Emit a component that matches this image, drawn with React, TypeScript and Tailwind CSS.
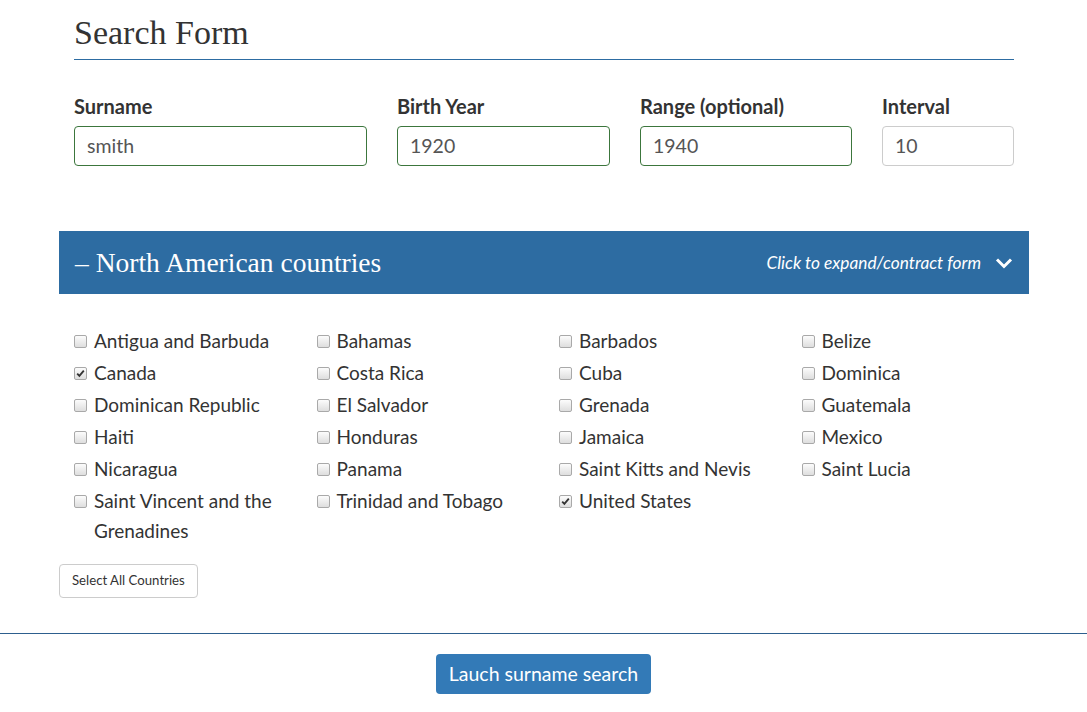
import React from "react";

const cols: { name: string; checked?: boolean }[][] = [
  [
    { name: "Antigua and Barbuda" },
    { name: "Canada", checked: true },
    { name: "Dominican Republic" },
    { name: "Haiti" },
    { name: "Nicaragua" },
    { name: "Saint Vincent and the Grenadines" },
  ],
  [
    { name: "Bahamas" },
    { name: "Costa Rica" },
    { name: "El Salvador" },
    { name: "Honduras" },
    { name: "Panama" },
    { name: "Trinidad and Tobago" },
  ],
  [
    { name: "Barbados" },
    { name: "Cuba" },
    { name: "Grenada" },
    { name: "Jamaica" },
    { name: "Saint Kitts and Nevis" },
    { name: "United States", checked: true },
  ],
  [
    { name: "Belize" },
    { name: "Dominica" },
    { name: "Guatemala" },
    { name: "Mexico" },
    { name: "Saint Lucia" },
  ],
];

function Box({ checked }: { checked?: boolean }) {
  return (
    <span className="mt-[9px] flex h-[13px] w-[13px] shrink-0 items-center justify-center rounded-[2px] border border-[#a9a9a9] bg-gradient-to-b from-[#fcfcfc] to-[#dedede]">
      {checked && (
        <svg width="9" height="9" viewBox="0 0 9 9">
          <path d="M1.2 4.6 L3.4 6.9 L7.8 1.6" fill="none" stroke="#333" strokeWidth="1.8" />
        </svg>
      )}
    </span>
  );
}

function Field({ label, value, w, ok = true }: { label: string; value: string; w: string; ok?: boolean }) {
  return (
    <div className={w}>
      <div className="text-[20px] font-bold leading-[24px] text-[#333]">{label}</div>
      <div
        className={`mt-[8px] flex h-[40px] items-center rounded-[4px] border px-[12px] text-[19.5px] text-[#555] ${
          ok ? "border-[#3c763d]" : "border-[#ccc]"
        }`}
      >
        {value}
      </div>
    </div>
  );
}

export default function App() {
  return (
    <div className="min-h-[712px] w-[1087px] bg-white font-['Lato',sans-serif] text-[#333]">
      <div className="ml-[59px] w-[970px]">
        <div className="px-[15px]">
          <h1 className="border-b border-[#2d6ca2] pb-[6px] pt-[13px] font-['Liberation_Serif',serif] text-[34px] leading-[40px] text-[#333]">
            Search Form
          </h1>
          <div className="mt-[34px] flex gap-[30px]">
            <Field label="Surname" value="smith" w="w-[293px]" />
            <Field label="Birth Year" value="1920" w="w-[213px]" />
            <Field label="Range (optional)" value="1940" w="w-[212px]" />
            <Field label="Interval" value="10" w="w-[132px]" ok={false} />
          </div>
        </div>
        <div className="mt-[65px] flex h-[63px] items-center justify-between bg-[#2d6ca2] pl-[16px] pr-[16px] text-white">
          <div className="font-['Liberation_Serif',serif] text-[27.5px]">– North American countries</div>
          <div className="flex items-center gap-[14px]">
            <span className="text-[17.3px] italic">Click to expand/contract form</span>
            <svg width="18" height="12" viewBox="0 0 18 12">
              <path d="M2 2.5 L9 9.5 L16 2.5" fill="none" stroke="#fff" strokeWidth="3" />
            </svg>
          </div>
        </div>
        <div className="mt-[32px] grid grid-cols-4">
          {cols.map((c, i) => (
            <div key={i} className="px-[15px]">
              {c.map((it) => (
                <div key={it.name} className="mb-[2px] flex gap-[7px] text-[19px] leading-[30px] text-[#333]">
                  <Box checked={it.checked} />
                  <span>{it.name}</span>
                </div>
              ))}
            </div>
          ))}
        </div>
        <button className="mt-[16px] h-[34px] rounded-[4px] border border-[#ccc] bg-white px-[12px] text-[13.2px] text-[#333]">
          Select All Countries
        </button>
      </div>
      <div className="mt-[35px] border-t border-[#2d5f8e]" />
      <div className="mt-[20px] flex justify-center">
        <button className="h-[40px] rounded-[4px] bg-[#337ab7] px-[13px] text-[19.5px] text-white">
          Lauch surname search
        </button>
      </div>
    </div>
  );
}
